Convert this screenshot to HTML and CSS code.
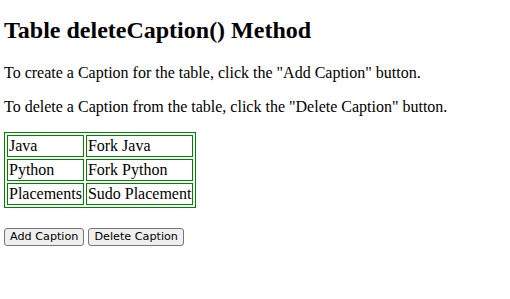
FILE: index.html
```html
<!DOCTYPE html>
<html lang="en">
<head>
    <meta charset="UTF-8">
    <title>Table deleteCaption() Method</title>
    <link rel="stylesheet" href="styles.css">
</head>
<body>
    <h1>Table deleteCaption() Method</h1>
    <p>To create a Caption for the table, click the "Add Caption" button.</p>
    <p>To delete a Caption from the table, click the "Delete Caption" button.</p>
    <table id="myTable" class="grid">
        <tr>
            <td>Java</td>
            <td>Fork Java</td>
        </tr>
        <tr>
            <td>Python</td>
            <td>Fork Python</td>
        </tr>
        <tr>
            <td>Placements</td>
            <td>Sudo Placement</td>
        </tr>
    </table>
    <br>
    <button class="btn">Add Caption</button>
    <button class="btn">Delete Caption</button>
</body>
</html>
```

FILE: styles.css
```css
body {
    margin: 4px;
    font-family: "Liberation Serif", "Times New Roman", serif;
    font-size: 16px;
}
h1 {
    font-size: 24px;
    margin: 13px 0 20px;
}
p {
    margin: 16px 0;
}
.grid,
.grid td {
    border: 1px solid green;
}
.grid td {
    padding: 1px;
}
.btn {
    font-family: "DejaVu Sans", Tahoma, sans-serif;
    font-size: 11.2px;
    line-height: 14px;
    padding: 1px 5px;
    margin: 0;
    color: #000;
    background: #efefef;
    border: 1px solid #767676;
    border-radius: 3px;
}
```
